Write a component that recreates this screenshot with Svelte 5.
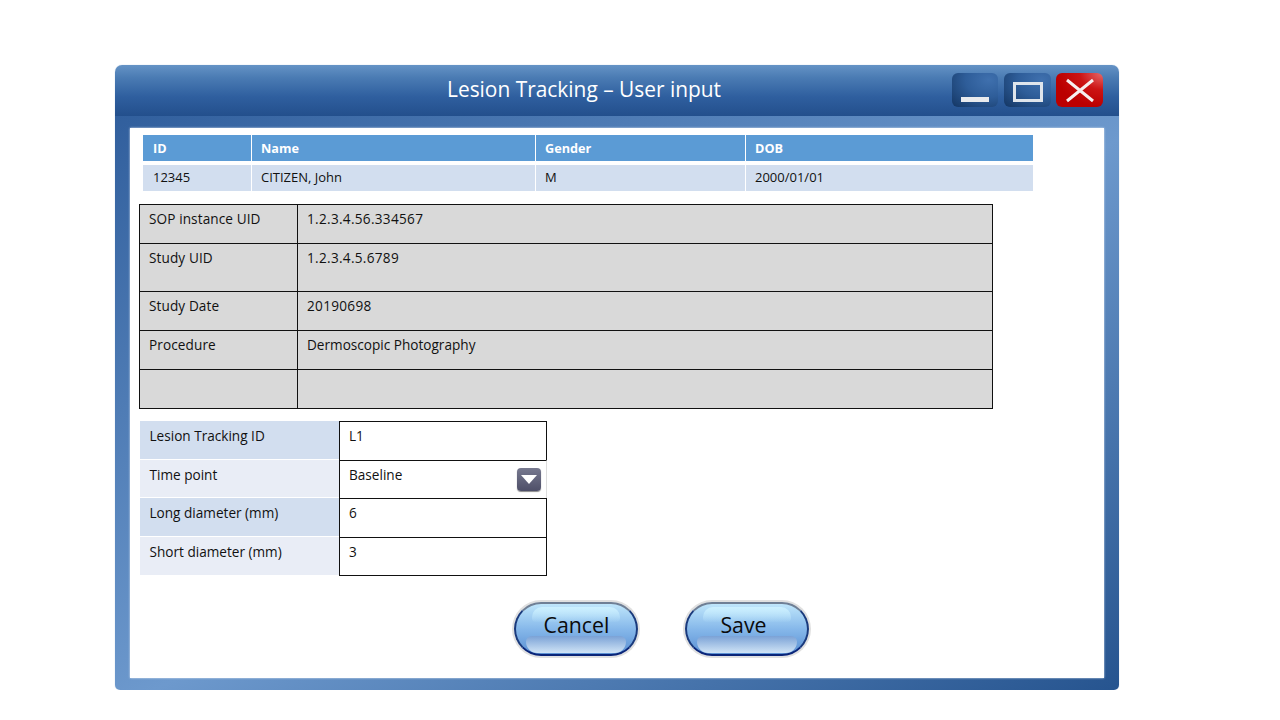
<script>
  const patientHead = ['ID', 'Name', 'Gender', 'DOB'];
  const patientRow = ['12345', 'CITIZEN, John', 'M', '2000/01/01'];
  const study = [
    { k: 'SOP instance UID', v: '1.2.3.4.56.334567', h: 39, num: true },
    { k: 'Study UID', v: '1.2.3.4.5.6789', h: 48, num: true },
    { k: 'Study Date', v: '20190698', h: 39, num: true },
    { k: 'Procedure', v: 'Dermoscopic Photography', h: 39 },
    { k: '', v: '', h: 39 }
  ];
  const form = [
    { k: 'Lesion Tracking ID', v: 'L1', h: 39 },
    { k: 'Time point', v: 'Baseline', select: true, h: 38 },
    { k: 'Long diameter (mm)', v: '6', h: 39 },
    { k: 'Short diameter (mm)', v: '3', h: 39 }
  ];
</script>

<div class="window">
  <header class="titlebar">
    <h1>Lesion Tracking – User input</h1>
    <div class="controls">
      <button class="ctl min" aria-label="Minimise">
        <svg width="46" height="34" viewBox="0 0 46 34"><rect x="9" y="24" width="28" height="5" fill="#e9ebee"/></svg>
      </button>
      <button class="ctl" aria-label="Maximise">
        <svg width="47" height="34" viewBox="0 0 47 34"><rect x="10.5" y="10.5" width="27" height="17" fill="none" stroke="#dfe5ec" stroke-width="3"/></svg>
      </button>
      <button class="ctl close" aria-label="Close">
        <svg width="47" height="34" viewBox="0 0 47 34"><path d="M11 7 L37 28 M37 7 L11 28" stroke="#f6efef" stroke-width="3" fill="none"/></svg>
      </button>
    </div>
  </header>

  <div class="frame">
    <main class="content">
      <section class="patient">
        {#each patientHead as h}<div class="ph">{h}</div>{/each}
        {#each patientRow as c}<div class="pc">{c}</div>{/each}
      </section>

      <section class="study">
        {#each study as r}
          <div class="srow" style="height:{r.h}px">
            <div class="sk">{r.k}</div>
            <div class="sv" class:num={r.num}>{r.v}</div>
          </div>
        {/each}
      </section>

      <section class="form">
        {#each form as r, i}
          <div class="frow" style="height:{r.h}px">
            <div class="fk" class:alt={i % 2 === 1}>{r.k}</div>
            <div class="fv" class:sel={r.select}>
              {r.v}
              {#if r.select}
                <span class="drop">
                  <svg width="24" height="23" viewBox="0 0 24 23"><path d="M4 7 H20 L12 16 Z" fill="#fff"/></svg>
                </span>
              {/if}
            </div>
          </div>
        {/each}
      </section>

      <div class="actions">
        <button class="pill">Cancel</button>
        <button class="pill save">Save</button>
      </div>
    </main>
  </div>
</div>

<style>
  :global(body) { margin: 0; background: #fff; }
  .window {
    width: 1004px;
    height: 625px;
    margin: 65px 0 0 115px;
    display: flex;
    flex-direction: column;
    border-radius: 7px 7px 5px 5px;
    overflow: hidden;
    font-family: "Open Sans", "Noto Sans", sans-serif;
    color: #111;
    font-size: 13.6px;
    box-shadow: 0 0 1px #9db6d6;
  }
  .titlebar {
    height: 51px;
    flex: none;
    background: linear-gradient(#6593c6 0%, #4a7bb3 25%, #2f5f9f 62%, #234f8c 100%);
    display: flex;
    align-items: flex-start;
    position: relative;
  }
  h1 {
    margin: 0;
    position: absolute;
    left: 332px;
    top: 9px;
    font-size: 20.9px;
    line-height: 30px;
    font-weight: 400;
    color: #fff;
    white-space: nowrap;
  }
  .controls {
    margin: 8px 0 0 837px;
    display: flex;
    gap: 6px;
  }
  .ctl {
    width: 47px;
    height: 34px;
    padding: 0;
    border: 0;
    border-radius: 6px;
    display: block;
    background: radial-gradient(ellipse at 80% 20%, #3f70ae 0%, #2e5d99 45%, #143663 100%);
  }
  .ctl.min { width: 46px; }
  .ctl svg { display: block; }
  .close {
    margin-left: -1px;
    background: radial-gradient(ellipse at 100% 0%, #e86a6a 0%, #cc1414 35%, #bb0000 70%);
  }
  .frame {
    flex: 1;
    padding: 12px 15px 12px 15px;
    background: linear-gradient(to bottom right, #315f9d 0%, #6d99cd 52%, #26548f 100%);
  }
  .content {
    height: 100%;
    box-sizing: border-box;
    background: #fff;
    padding: 7px 0 0 9px;
    box-shadow: 0 0 2px #dbe6f3;
  }
  .patient {
    margin-left: 4px;
    width: 890px;
    display: grid;
    grid-template-columns: 108px 283px 209px 287px;
    grid-template-rows: 26px 26px;
    column-gap: 1px;
    row-gap: 4px;
  }
  .ph {
    background: #5b9bd5;
    color: #fff;
    font-weight: 700;
    padding: 4px 0 0 9px;
    line-height: 18px;
    font-size: 12.7px;
  }
  .pc {
    background: #d2deef;
    padding: 3px 0 0 9px;
    line-height: 18px;
    font-size: 13px;
  }
  .ph:first-child, .pc:nth-child(5) { padding-left: 10px; }
  .study {
    margin-top: 13px;
    width: 854px;
    box-sizing: border-box;
    border: 1px solid #111;
    border-bottom: 0;
    background: #d9d9d9;
  }
  .srow {
    display: flex;
    box-sizing: border-box;
    border-bottom: 1px solid #111;
    line-height: 20px;
  }
  .sk {
    width: 148px;
    padding: 4px 0 0 9px;
    border-right: 1px solid #111;
    letter-spacing: 0.1px;
  }
  .sv {
    padding: 4px 0 0 9px;
  }
  .sv.num { letter-spacing: 0.3px; }
  .form {
    margin-top: 12px;
    margin-left: 1px;
    width: 407px;
  }
  .frow {
    display: flex;
    line-height: 20px;
  }
  .fk {
    width: 199px;
    flex: none;
    background: #d2deef;
    padding: 5px 0 0 9.5px;
    box-sizing: border-box;
    border-bottom: 1px solid #fff;
  }
  .fk.alt { background: #e9edf6; }
  .fv {
    flex: 1;
    box-sizing: border-box;
    border: 1px solid #111;
    border-bottom: 0;
    padding: 4px 0 0 9px;
    position: relative;
  }
  .frow:last-child .fv { border-bottom: 1px solid #111; }
  .fv.sel { border-right-color: #ddd; }
  .drop {
    position: absolute;
    right: 5px;
    top: 7px;
    width: 24px;
    height: 23px;
    border-radius: 4px;
    background: linear-gradient(#77798f, #4e4f68);
    box-shadow: 0 1px 1px #8a8a8a;
  }
  .drop svg { display: block; }
  .actions {
    margin: 26px 0 0 375px;
    display: flex;
    gap: 47px;
  }
  .pill {
    width: 124px;
    height: 54px;
    padding: 0 0 10px 1px;
    border-radius: 28px;
    border: 2px solid;
    border-color: #6f7f95 #1a3a7c #0a2578 #1a3a7c;
    background: linear-gradient(#bfe6fb 0%, #86b8ea 50%, #5b90d3 100%);
    box-shadow: 0 0 0 2px #e0e0e0;
    font-family: "Open Sans", "Noto Sans", sans-serif;
    font-size: 21.3px;
    color: #0b0b0b;
    box-sizing: border-box;
    position: relative;
    isolation: isolate;
  }
  .pill.save { padding-right: 8px; }
  .pill::before {
    content: "";
    position: absolute;
    z-index: -1;
    left: 16px;
    right: 16px;
    top: 3px;
    height: 15px;
    border-radius: 10px 10px 4px 4px;
    background: linear-gradient(#ccf0ff, rgba(170, 218, 248, 0.1));
  }
  .pill::after {
    content: "";
    position: absolute;
    z-index: -1;
    left: 10px;
    right: 10px;
    bottom: 1px;
    height: 17px;
    border-radius: 7px 7px 14px 14px;
    background: linear-gradient(#7ba2d6, #d0e4f6);
  }
</style>
